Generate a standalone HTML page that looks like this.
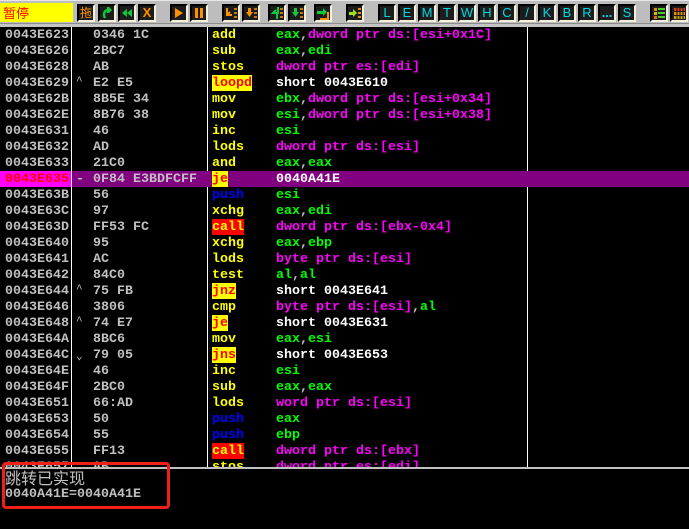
<!DOCTYPE html>
<html><head><meta charset="utf-8">
<style>
html,body{margin:0;padding:0;background:#000}
#p{position:relative;width:689px;height:529px;overflow:hidden;background:#000;font:bold 13.33px/16px "Liberation Mono",monospace;color:#c0c0c0}
#tb{position:absolute;left:0;top:0;width:689px;height:27px;background:#bdbdbd}
#tb i{position:absolute;left:0;width:689px;display:block}
#st{position:absolute;left:0;top:3px;width:73px;height:19px;background:#ff0;color:#f00;font:400 13px/19px "Noto Sans CJK SC",sans-serif;padding-left:3px;box-sizing:border-box}
.b{position:absolute;top:4px;width:18px;height:18px;box-sizing:border-box;background:#1c1c1c;border:2px solid #000;border-right-color:#f4f0dc;border-bottom-color:#f4f0dc;font:400 13px/14px "Liberation Sans",sans-serif;color:#00d8e0;text-align:center;overflow:hidden}
.b svg{position:absolute;left:0;top:0}
.r{position:absolute;left:0;width:689px;height:16px;white-space:pre}
.r span{position:absolute;top:0;height:16px;line-height:18px;overflow:hidden}
.a{left:5px}.h{left:93px}.c{left:212px;color:#ff0}.d{left:276px}
.r span.m{left:76px;font-size:11px;font-weight:400;line-height:14px}
.r span.n{left:76px;line-height:18px}
.g{color:#0f0}.v{color:#f0f}.w{color:#fff}
.j{background:#ff0;color:#f00!important}.k{background:#f00;color:#ff0!important}.u{color:#00f!important}
.l{position:absolute;top:27px;width:1px;height:440px;background:#fff}
</style></head><body><div id="p">
<div id="tb"><i style="top:0;height:1px;background:#e8e8e8"></i><i style="top:23px;height:1px;background:#8c8c8c"></i><i style="top:24px;height:3px;background:#c4c4c4"></i></div>
<div id="st">暂停</div>

<div class="b" style="left:77px;color:#ff9000;font:400 12px/14px 'Noto Sans CJK SC',sans-serif">拖</div>
<div class="b" style="left:98px"><svg width="14" height="14"><path d="M5 12C3 8 4 4 9 4" fill="none" stroke="#10c838" stroke-width="2.500"/><path d="M7 1h2l3 3-3 3H7z" fill="#10c838"/></svg></div>
<div class="b" style="left:118px"><svg width="14" height="14"><path d="M7 3v8L2 7zM12 3v8L7 7z" fill="#10c838"/></svg></div>
<div class="b" style="left:138px;color:#ff9000;font-weight:bold">X</div>
<div class="b" style="left:170px"><svg width="14" height="14"><path d="M3 2v10l8-5z" fill="#ff9000"/></svg></div>
<div class="b" style="left:190px"><svg width="14" height="14"><path d="M3 2h3v10H3zM8 2h3v10H8z" fill="#ff9000"/></svg></div>
<div class="b" style="left:222px"><svg width="14" height="14"><path d="M3 2v7h5M6 6l-3 3" fill="none" stroke="#ff9000" stroke-width="2"/><path d="M10 2h3v2h-3zM10 6h3v2h-3zM10 10h3v2h-3z" fill="#c87800"/></svg></div>
<div class="b" style="left:242px"><svg width="14" height="14"><path d="M4 2h3v4h2l-3.500 5L2 6h2z" fill="#ff9000"/><path d="M10 2h3v2h-3zM10 6h3v2h-3zM10 10h3v2h-3z" fill="#c87800"/></svg></div>
<div class="b" style="left:268px"><svg width="14" height="14"><path d="M8 1v6H3l3-3M2 7h5v6" fill="none" stroke="#10c838" stroke-width="2"/><path d="M10 2h3v2h-3zM10 6h3v2h-3zM10 10h3v2h-3z" fill="#c87800"/></svg></div>
<div class="b" style="left:288px"><svg width="14" height="14"><path d="M4 2h3v4h2l-3.500 5L2 6h2z" fill="#10c838"/><path d="M10 2h3v2h-3zM10 6h3v2h-3zM10 10h3v2h-3z" fill="#c87800"/></svg></div>
<div class="b" style="left:314px"><svg width="14" height="14"><path d="M1 5h6V2l4 4-4 4V8H1z" fill="#10c838"/><path d="M12 6v7H4" fill="none" stroke="#ff9000" stroke-width="2"/></svg></div>
<div class="b" style="left:346px"><svg width="14" height="14"><path d="M1 6h4V3l4 4-4 4V9H1z" fill="#a0e020"/><path d="M10 2h3v2h-3zM10 6h3v2h-3zM10 10h3v2h-3z" fill="#e09000"/></svg></div>

<div class="b" style="left:378px">L</div>
<div class="b" style="left:398px">E</div>
<div class="b" style="left:418px">M</div>
<div class="b" style="left:438px">T</div>
<div class="b" style="left:458px">W</div>
<div class="b" style="left:478px">H</div>
<div class="b" style="left:498px">C</div>
<div class="b" style="left:518px">/</div>
<div class="b" style="left:538px">K</div>
<div class="b" style="left:558px">B</div>
<div class="b" style="left:578px">R</div>
<div class="b" style="left:598px;font-weight:bold">...</div>
<div class="b" style="left:618px">S</div>
<div class="b" style="left:650px"><svg width="14" height="14"><path d="M2 2h3v3H2z" fill="#e09000"/><path d="M2 6h3v3H2z" fill="#d8c000"/><path d="M2 10h3v3H2z" fill="#e07000"/><path d="M6 2h7v2H6zM6 6h7v2H6zM6 10h7v2H6z" fill="#50c828"/></svg></div>
<div class="b" style="left:670px"><svg width="14" height="14"><path d="M2 2h11v3H2z" fill="#d04020"/><path d="M2 6h11v3H2z" fill="#e09000"/><path d="M2 10h11v3H2z" fill="#c8a000"/><path d="M5 2v11M8 2v11M11 2v11" stroke="#111" stroke-width="1"/></svg></div>

<div class="r" style="top:171px;background:#800080"></div>
<div class="r" style="top:171px;width:71px;background:#f0f"></div>
<div class="l" style="left:71px"></div>
<div class="l" style="left:207px;height:144px"></div>
<div class="l" style="left:207px;top:187px;height:280px"></div>
<div class="l" style="left:527px;height:144px"></div>
<div class="l" style="left:527px;top:187px;height:280px"></div>

<div class="r" style="top:27px"><span class="a">0043E623</span><span class="h">0346 1C</span><span class="c">add</span><span class="d"><b class="g">eax</b>,<b class="v">dword ptr ds:[esi+0x1C]</b></span></div>
<div class="r" style="top:43px"><span class="a">0043E626</span><span class="h">2BC7</span><span class="c">sub</span><span class="d"><b class="g">eax</b>,<b class="g">edi</b></span></div>
<div class="r" style="top:59px"><span class="a">0043E628</span><span class="h">AB</span><span class="c">stos</span><span class="d v">dword ptr es:[edi]</span></div>
<div class="r" style="top:75px"><span class="a">0043E629</span><span class="m">^</span><span class="h">E2 E5</span><span class="c j">loopd</span><span class="d w">short 0043E610</span></div>
<div class="r" style="top:91px"><span class="a">0043E62B</span><span class="h">8B5E 34</span><span class="c">mov</span><span class="d"><b class="g">ebx</b>,<b class="v">dword ptr ds:[esi+0x34]</b></span></div>
<div class="r" style="top:107px"><span class="a">0043E62E</span><span class="h">8B76 38</span><span class="c">mov</span><span class="d"><b class="g">esi</b>,<b class="v">dword ptr ds:[esi+0x38]</b></span></div>
<div class="r" style="top:123px"><span class="a">0043E631</span><span class="h">46</span><span class="c">inc</span><span class="d g">esi</span></div>
<div class="r" style="top:139px"><span class="a">0043E632</span><span class="h">AD</span><span class="c">lods</span><span class="d v">dword ptr ds:[esi]</span></div>
<div class="r" style="top:155px"><span class="a">0043E633</span><span class="h">21C0</span><span class="c">and</span><span class="d"><b class="g">eax</b>,<b class="g">eax</b></span></div>
<div class="r" style="top:171px"><span class="a" style="color:#f00">0043E635</span><span class="n">-</span><span class="h">0F84 E3BDFCFF</span><span class="c j">je</span><span class="d w">0040A41E</span></div>
<div class="r" style="top:187px"><span class="a">0043E63B</span><span class="h">56</span><span class="c u">push</span><span class="d g">esi</span></div>
<div class="r" style="top:203px"><span class="a">0043E63C</span><span class="h">97</span><span class="c">xchg</span><span class="d"><b class="g">eax</b>,<b class="g">edi</b></span></div>
<div class="r" style="top:219px"><span class="a">0043E63D</span><span class="h">FF53 FC</span><span class="c k">call</span><span class="d v">dword ptr ds:[ebx-0x4]</span></div>
<div class="r" style="top:235px"><span class="a">0043E640</span><span class="h">95</span><span class="c">xchg</span><span class="d"><b class="g">eax</b>,<b class="g">ebp</b></span></div>
<div class="r" style="top:251px"><span class="a">0043E641</span><span class="h">AC</span><span class="c">lods</span><span class="d v">byte ptr ds:[esi]</span></div>
<div class="r" style="top:267px"><span class="a">0043E642</span><span class="h">84C0</span><span class="c">test</span><span class="d"><b class="g">al</b>,<b class="g">al</b></span></div>
<div class="r" style="top:283px"><span class="a">0043E644</span><span class="m">^</span><span class="h">75 FB</span><span class="c j">jnz</span><span class="d w">short 0043E641</span></div>
<div class="r" style="top:299px"><span class="a">0043E646</span><span class="h">3806</span><span class="c">cmp</span><span class="d"><b class="v">byte ptr ds:[esi]</b>,<b class="g">al</b></span></div>
<div class="r" style="top:315px"><span class="a">0043E648</span><span class="m">^</span><span class="h">74 E7</span><span class="c j">je</span><span class="d w">short 0043E631</span></div>
<div class="r" style="top:331px"><span class="a">0043E64A</span><span class="h">8BC6</span><span class="c">mov</span><span class="d"><b class="g">eax</b>,<b class="g">esi</b></span></div>
<div class="r" style="top:347px"><span class="a">0043E64C</span><span class="m" style="top:3px">&#8964;</span><span class="h">79 05</span><span class="c j">jns</span><span class="d w">short 0043E653</span></div>
<div class="r" style="top:363px"><span class="a">0043E64E</span><span class="h">46</span><span class="c">inc</span><span class="d g">esi</span></div>
<div class="r" style="top:379px"><span class="a">0043E64F</span><span class="h">2BC0</span><span class="c">sub</span><span class="d"><b class="g">eax</b>,<b class="g">eax</b></span></div>
<div class="r" style="top:395px"><span class="a">0043E651</span><span class="h">66:AD</span><span class="c">lods</span><span class="d v">word ptr ds:[esi]</span></div>
<div class="r" style="top:411px"><span class="a">0043E653</span><span class="h">50</span><span class="c u">push</span><span class="d g">eax</span></div>
<div class="r" style="top:427px"><span class="a">0043E654</span><span class="h">55</span><span class="c u">push</span><span class="d g">ebp</span></div>
<div class="r" style="top:443px"><span class="a">0043E655</span><span class="h">FF13</span><span class="c k">call</span><span class="d v">dword ptr ds:[ebx]</span></div>
<div class="r" style="top:459px"><span class="a">0043E657</span><span class="h">AB</span><span class="c">stos</span><span class="d v">dword ptr es:[edi]</span></div>

<div style="position:absolute;left:0;top:467px;width:689px;height:62px;background:#000;border-top:2px solid #c0c0c0;box-sizing:border-box"></div>
<div style="position:absolute;left:5px;top:469px;font:400 16px/17px 'WenQuanYi Zen Hei','Noto Sans CJK SC',sans-serif;color:#c0c0c0">跳转已实现</div>
<div style="position:absolute;left:5px;top:487px;line-height:16px">0040A41E=0040A41E</div>
<div style="position:absolute;left:2px;top:462px;width:168px;height:47px;box-sizing:border-box;border:3px solid #ef2018;border-radius:4px"></div>
</div></body></html>
